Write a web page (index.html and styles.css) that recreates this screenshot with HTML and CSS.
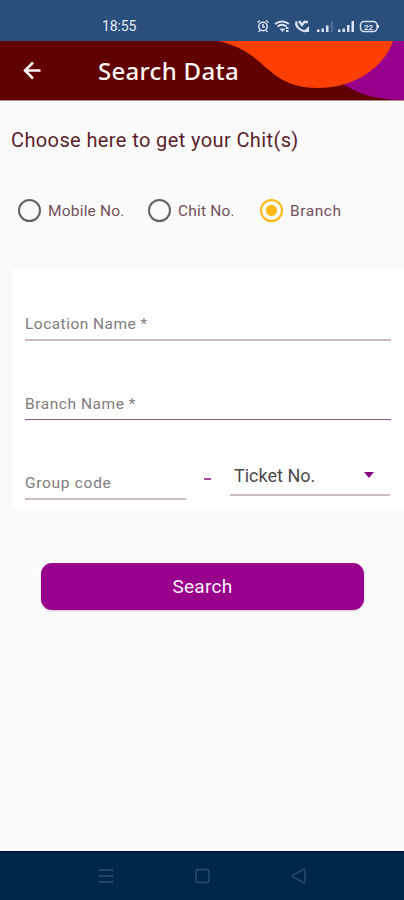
FILE: index.html
```html
<!DOCTYPE html>
<html lang="en">
<head>
<meta charset="utf-8">
<title>Search Data</title>
<link rel="stylesheet" href="styles.css">
</head>
<body>
<div class="screen">
  <div class="status">
    <span class="time">18:55</span>
    <svg class="status-icons" width="128" height="16" viewBox="0 0 128 16" fill="none" stroke="#d9e2f2" stroke-width="1.5">
      <circle cx="8" cy="8.5" r="4.2"/><path d="M8 6v3h2M2.500 4.500l2.500-2M13.500 4.500l-2.500-2M5 12.500l-1.500 1.500M11 12.500l1.500 1.500"/>
      <path d="M20 6q7-5 14 0M22.500 8.500q4.500-3.500 9 0" stroke-width="2"/><path d="M24.500 10.500h6l-3 3.500zM31 9h2.500v2H31zM31 12h2.500v2H31z" fill="#d9e2f2" stroke="none"/>
      <path d="M41.500 3.500q-1 4 2.500 7t6 2.500M44 3l3 4 3-4M49 4h4" stroke-width="2.300"/><path d="M48 14l6-6v6z" fill="#d9e2f2" stroke="none"/>
      <g fill="#d9e2f2" stroke="none"><path d="M62 11.500h2.500V14H62zM66.500 10.500H69V14h-2.500zM71 7.500h2.500V14H71z"/><path d="M75.500 3H78v11h-2.500z" opacity=".2"/><path d="M83 11.500h2.500V14H83zM87.500 10.500H90V14h-2.500zM92 7h2.500v7H92zM96.500 3H99v11h-2.500z"/></g>
      <rect x="105.500" y="3.500" width="16.500" height="10" rx="3.500"/><path d="M123 7v3" stroke-width="2"/>
      <text x="109" y="11.500" class="battery">22</text>
    </svg>
  </div>
  <header class="header">
    <svg class="waves" width="404" height="59" viewBox="0 0 404 59">
      <path d="M343 43C359 53 376 59 404 59V0H389Z" fill="#98008c"/>
      <path d="M218 0C269 11 264 46 318 47C357 47 385 24 393 0Z" fill="#fa3f00"/>
    </svg>
    <svg class="back" width="20" height="20" viewBox="0 0 20 20" fill="none" stroke="#fff5f2" stroke-width="2.500"><path d="M18.500 9.500H3M11 1.500L3 9.500l8 8"/></svg>
    <h1 class="title">Search Data</h1>
  </header>
  <main class="main">
    <p class="intro">Choose here to get your Chit(s)</p>
    <div class="options">
      <div class="option mobile"><i class="radio"></i><span>Mobile No.</span></div>
      <div class="option chit"><i class="radio"></i><span>Chit No.</span></div>
      <div class="option branch"><i class="radio on"></i><span>Branch</span></div>
    </div>
    <section class="card">
      <div class="field location"><span>Location Name *</span></div>
      <div class="field branch-name"><span>Branch Name *</span></div>
      <div class="row">
        <div class="field group"><span>Group code</span></div>
        <span class="dash"></span>
        <div class="field ticket"><span>Ticket No.</span><i class="caret"></i></div>
      </div>
    </section>
    <div class="button"><span>Search</span></div>
  </main>
  <nav class="nav">
    <svg width="404" height="48" viewBox="0 0 404 48" fill="none" stroke="#23456c" stroke-width="1.800">
      <path d="M99 18h14M99 24h14M99 30h14"/>
      <rect x="196" y="17.500" width="13" height="13" rx="2.500"/>
      <path d="M292 24l11-6.500q2-1 2 1v11q0 2-2 1z" stroke-linejoin="round"/>
    </svg>
  </nav>
</div>
</body>
</html>
```
FILE: styles.css
```css
* { box-sizing: border-box; }
body { margin: 0; font-family: Roboto, "Liberation Sans", sans-serif; }
.screen { width: 404px; height: 900px; display: flex; flex-direction: column; background: #fafafa; overflow: hidden; }
.status { height: 41px; background: #2b4f7d; display: flex; align-items: flex-start; padding: 18px 0 0 102px; }
.time { width: 153px; font-size: 14px; line-height: 17px; letter-spacing: -.15px; color: #e4ebf6; }
.battery { font: bold 8px Roboto, sans-serif; fill: #d9e2f2; stroke: none; }
.header { position: relative; height: 60px; background: #600000; border-bottom: 1px solid #b08a88; display: flex; align-items: center; padding-left: 22px; }
.waves { position: absolute; left: 0; top: 0; }
.back { position: relative; width: 20px; }
.title { position: relative; margin: 0 0 0 56px; font: 500 24px/30px "Noto Sans", sans-serif; letter-spacing: .3px; color: #fff5f2; white-space: nowrap; }
.main { flex: 1; display: flex; flex-direction: column; }
.intro { margin: 26px 0 0 11px; font-size: 20px; line-height: 26px; letter-spacing: .39px; color: #5c222c; white-space: nowrap; }
.options { display: flex; margin: 45px 0 0 18px; height: 24px; }
.option { display: flex; align-items: center; gap: 7px; font-size: 15.5px; letter-spacing: .2px; color: #75505a; white-space: nowrap; }
.option span { padding-top: 1px; }
.branch span { letter-spacing: .55px; }
.mobile { width: 130px; }
.chit { width: 112px; }
.radio { width: 23px; height: 23px; border: 2px solid #65605f; border-radius: 50%; flex: none; }
.radio.on { border-width: 2.5px; border-color: #fcb813; background: radial-gradient(circle, #fcb813 5px, transparent 6px); }
.card { margin: 47px 0 0 12px; height: 240px; background: #fff; padding: 0 13px; }
.field { display: flex; align-items: flex-end; font-size: 15.5px; line-height: 20px; letter-spacing: .47px; color: #807c7e; white-space: nowrap; border-bottom: 2px solid #cdbbc2; padding-bottom: 5px; }
.location { height: 72px; }
.branch-name { height: 79px; border-bottom: 1px solid #8d5a87; }
.branch-name span { letter-spacing: .55px; }
.row { display: flex; height: 80px; align-items: flex-start; }
.group { width: 161px; height: 80px; letter-spacing: .7px; }
.dash { width: 7px; height: 2px; margin: 58px 19px 0 18px; background: #a44da0; }
.ticket { width: 160px; height: 76px; padding: 0 16px 8px 4px; justify-content: space-between; font-size: 18px; letter-spacing: 0; color: #4c494a; }
.caret { border: 5.5px solid transparent; border-top: 6px solid #8b0083; border-bottom: 0; margin-bottom: 8px; }
.button { margin: 54px 0 0 41px; width: 323px; height: 47px; border-radius: 11px; background: #98008c; color: #fff0fc; display: flex; align-items: center; justify-content: center; font-size: 19px; letter-spacing: .3px; box-shadow: 0 1px 2px #d5c2d3; }
.nav { height: 49px; border-top: 1px solid #000d20; background: #00264d; }
.nav svg { display: block; }
```
